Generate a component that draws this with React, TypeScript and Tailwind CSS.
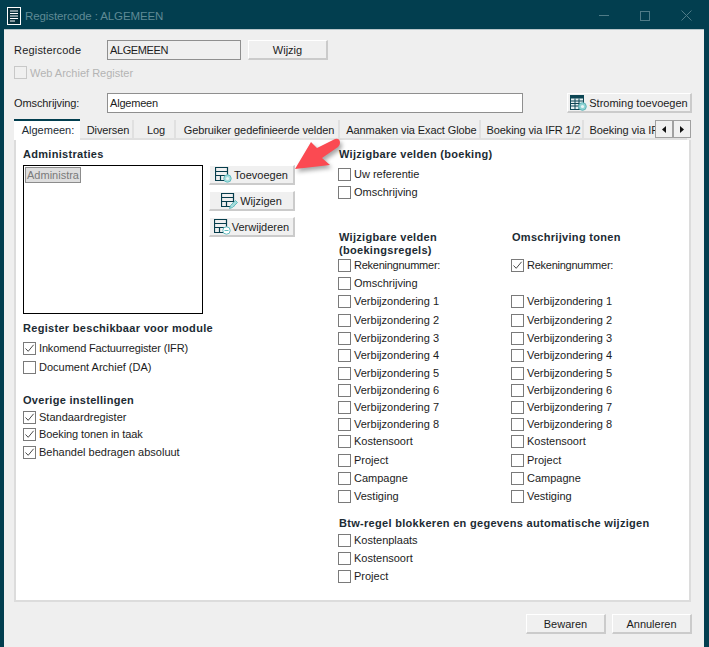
import React from "react";

const font = "font-['Liberation_Sans',Arial,sans-serif]";

function Check({ checked, disabled }: { checked?: boolean; disabled?: boolean }) {
  return (
    <span className={`flex h-[13px] w-[13px] shrink-0 items-center justify-center border ${disabled ? "border-[#c8c8c8] bg-[#f0f0f0]" : "border-[#7a7a7a] bg-white"}`}>
      {checked && (
        <svg width="11" height="11" viewBox="0 0 11 11" fill="none">
          <path d="M1.5 5.5 L4.2 8.3 L9.6 1.8" stroke="#4a4a4a" strokeWidth="1" />
        </svg>
      )}
    </span>
  );
}

function CheckRow({ label, checked, h = "h-[18px]", disabled, tr = "" }: { label: string; checked?: boolean; h?: string; disabled?: boolean; tr?: string }) {
  return (
    <div className={`flex items-start gap-[3px] ${h}`}>
      <Check checked={checked} disabled={disabled} />
      <span className={`whitespace-nowrap ${tr} ${disabled ? "text-[#b4b4b4]" : "text-[#1c1c1c]"}`}>{label}</span>
    </div>
  );
}

function Heading({ children, className = "" }: { children: React.ReactNode; className?: string }) {
  return <div className={`font-bold tracking-[0.3px] text-[#1c2b33] leading-[13px] ${className}`}>{children}</div>;
}

function Btn({ children, className = "" }: { children: React.ReactNode; className?: string }) {
  return (
    <div className={`flex h-[20px] items-center justify-center whitespace-nowrap border-t border-l border-t-white border-l-white border-r-2 border-b-2 border-r-[#cbcbcb] border-b-[#cbcbcb] bg-[#f0f0f0] pt-[1px] text-[#1c1c1c] ${className}`}>
      {children}
    </div>
  );
}

function TableIcon({ badge }: { badge: "plus" | "pen" | "minus" }) {
  return (
    <svg width="17" height="16" viewBox="0 0 17 16" fill="none" className="-mt-[1px] shrink-0">
      <path d="M0.5 0.5H12.5V13.5H0.5ZM0.5 4.5H12.5M0.5 8.5H12.5M5.5 8.5V13.5" stroke="#063d4c" strokeWidth="1.2" />
      {badge === "plus" && <><circle cx="12.5" cy="11.5" r="3.7" fill="#a5dcdc" stroke="#63bcbf" /><circle cx="12.5" cy="11.5" r="1.6" fill="#e8f6f6" /></>}
      {badge === "minus" && <><circle cx="12.5" cy="11.5" r="3.7" fill="#ffffff" stroke="#63bcbf" /><path d="M10.5 11.5H14.5" stroke="#63bcbf" /></>}
      {badge === "pen" && <path d="M8.5 15.5L9.5 12.5L14.5 7.5L16.5 9.5L11.5 14.5Z" fill="#a5dcdc" stroke="#63bcbf" />}
    </svg>
  );
}

const tabs = [
  { label: "Diversen", w: "w-[54px]" },
  { label: "Log", w: "w-[42px]" },
  { label: "Gebruiker gedefinieerde velden", w: "w-[164px]" },
  { label: "Aanmaken via Exact Globe", w: "w-[141px]" },
  { label: "Boeking via IFR 1/2", w: "w-[103px]" },
  { label: "Boeking via IFR 2/2", w: "w-[103px]" },
];

const colA: [string, string, string?][] = [
  ["Rekeningnummer:", "h-[18px]", "tracking-[-0.25px]"],
  ["Omschrijving", "h-[18px]"],
  ["Verbijzondering 1", "h-[19px]"],
  ["Verbijzondering 2", "h-[18px]"],
  ["Verbijzondering 3", "h-[17px]"],
  ["Verbijzondering 4", "h-[18px]"],
  ["Verbijzondering 5", "h-[17px]"],
  ["Verbijzondering 6", "h-[17px]"],
  ["Verbijzondering 7", "h-[17px]"],
  ["Verbijzondering 8", "h-[17px]"],
  ["Kostensoort", "h-[19px]"],
  ["Project", "h-[18px]"],
  ["Campagne", "h-[18px]"],
  ["Vestiging", "h-[18px]"],
];

export default function App() {
  return (
    <div className={`relative flex h-[647px] w-[709px] flex-col overflow-hidden bg-[#023e4f] text-[11px] leading-[13px] ${font}`}>
      {/* Title bar */}
      <div className="flex h-[29px] shrink-0 items-center pl-[7px] pt-[2px]">
        <svg width="14" height="18" viewBox="0 0 14 18" fill="none">
          <rect x="0.5" y="0.5" width="13" height="17" fill="#06303c" stroke="#ffffff" />
          <path d="M3 4H11M3 6.5H11M3 9H11M3 11.5H11M3 14H8" stroke="#ffffff" />
        </svg>
        <span className="ml-[4px] mt-[1px] text-[11.5px] tracking-[-0.1px] text-[#5f8a95]">Registercode : ALGEMEEN</span>
        <div className="ml-auto flex items-center gap-[31px] pr-[17px]">
          <div className="h-px w-[10px] bg-[#4f7b87]" />
          <div className="h-[10px] w-[10px] border border-[#4f7b87]" />
          <svg width="11" height="11" viewBox="0 0 11 11"><path d="M0.5 0.5L10.5 10.5M10.5 0.5L0.5 10.5" stroke="#4f7b87" /></svg>
        </div>
      </div>

      {/* Window client */}
      <div className="ml-[4px] mr-[5px] flex h-[618px] flex-col border-t border-[#b8c6ca] bg-[#efefef] px-[10px]">
        <div className="mt-[10px] flex h-[20px] items-center">
          <span className="w-[93px] tracking-[0.2px] text-[#1c1c1c]">Registercode</span>
          <div className="flex h-[20px] w-[134px] items-center border border-[#8f8f8f] bg-[#efefef] pl-[2px] tracking-[-0.4px] text-[#1c1c1c]">ALGEMEEN</div>
          <Btn className="ml-[7px] w-[80px]">Wijzig</Btn>
        </div>
        <div className="mt-[6px]">
          <CheckRow label="Web Archief Register" disabled h="h-[13px]" tr="mt-[1px]" />
        </div>
        <div className="mt-[14px] flex h-[20px] items-center">
          <span className="w-[93px] tracking-[-0.1px] text-[#1c1c1c]">Omschrijving:</span>
          <div className="flex h-[20px] w-[416px] items-center border border-[#8f8f8f] bg-white pl-[2px] tracking-[-0.2px] text-[#1c1c1c]">Algemeen</div>
          <Btn className="ml-[44px] w-[125px] gap-[2px]">
            <svg width="17" height="16" viewBox="0 0 17 16" fill="none" className="-mt-[1px] shrink-0">
              <rect x="0.5" y="0.5" width="13" height="14" fill="#e6f1f2" stroke="#0d4654" />
              <rect x="1" y="1" width="12" height="2.5" fill="#0d4654" />
              <path d="M1 6H13M1 8.5H13M1 11H13M5 3.5V14.5M9 3.5V14.5" stroke="#0d4654" />
              <circle cx="12.5" cy="11.5" r="3.8" fill="#8fd3d4" stroke="#5fb5b8" />
              <circle cx="12.5" cy="11.5" r="1.6" fill="#e8f6f6" />
            </svg>
            Stroming toevoegen
          </Btn>
        </div>

        {/* Tabs */}
        <div className="relative mt-[6px] flex h-[21px] w-[677px] shrink-0 items-end overflow-hidden">
          <div className="z-10 flex h-[21px] w-[66px] shrink-0 justify-center border-t-2 border-[#023e4f] bg-white pl-[2px] pt-[3px] text-[#1c2b33]">Algemeen:</div>
          <div className="flex items-end">
            {tabs.map((t) => (
              <div key={t.label} className={`flex h-[20px] shrink-0 items-center justify-center whitespace-nowrap border-r-2 border-b-2 border-[#e0e0e0] bg-[#efefef] pl-[4px] pt-[3px] tracking-[-0.1px] text-[#1c1c1c] ${t.w}`}>
                {t.label}
              </div>
            ))}
          </div>
          <div className="absolute right-0 top-[1px] flex h-[18px] w-[36px] border border-[#a0a0a0] bg-[#f0f0f0]">
            <div className="flex flex-1 items-center justify-center border-r-2 border-[#a0a0a0]">
              <svg width="4" height="7" viewBox="0 0 4 7"><path d="M4 0V7L0 3.5Z" fill="#111" /></svg>
            </div>
            <div className="flex flex-1 items-center justify-center">
              <svg width="4" height="7" viewBox="0 0 4 7"><path d="M0 0V7L4 3.5Z" fill="#111" /></svg>
            </div>
          </div>
        </div>

        {/* Panel */}
        <div className="flex h-[462px] w-[677px] shrink-0 border-r-2 border-b-2 border-l-2 border-[#dcdcdc] bg-white pl-[7px]">
          {/* Left */}
          <div className="flex w-[316px] shrink-0 flex-col">
            <Heading className="mt-[8px]">Administraties</Heading>
            <div className="mt-[4px] flex">
              <div className="h-[149px] w-[180px] border border-black bg-white p-[1px]">
                <div className="flex h-[16px] w-[56px] items-center justify-center border border-[#8c8c8c] bg-[#dedede] text-[#7a7a7a]">Administra</div>
              </div>
              <div className="ml-[6px] flex flex-col gap-[6px]">
                <Btn className="w-[86px] gap-[2px]"><TableIcon badge="plus" />Toevoegen</Btn>
                <Btn className="w-[86px] gap-[2px]"><TableIcon badge="pen" />Wijzigen</Btn>
                <Btn className="w-[86px] gap-[1px]"><TableIcon badge="minus" />Verwijderen</Btn>
              </div>
            </div>
            <Heading className="mt-[8px]">Register beschikbaar voor module</Heading>
            <div className="mt-[7px] flex flex-col">
              <CheckRow label="Inkomend Factuurregister (IFR)" checked h="h-[19px]" tr="tracking-[-0.15px]" />
              <CheckRow label="Document Archief (DA)" h="h-[19px]" />
            </div>
            <Heading className="mt-[14px]">Overige instellingen</Heading>
            <div className="mt-[4px] flex flex-col">
              <CheckRow label="Standaardregister" h="h-[17px]" checked />
              <CheckRow label="Boeking tonen in taak" h="h-[18px]" checked tr="tracking-[-0.1px]" />
              <CheckRow label="Behandel bedragen absoluut" h="h-[18px]" checked />
            </div>
          </div>

          {/* Right */}
          <div className="flex flex-col">
            <Heading className="mt-[8px]">Wijzigbare velden (boeking)</Heading>
            <div className="-ml-[1px] mt-[7px] flex flex-col">
              <CheckRow label="Uw referentie" />
              <CheckRow label="Omschrijving" />
            </div>
            <div className="mt-[27px] flex">
              <div className="w-[172px]">
                <Heading className="w-[130px]">Wijzigbare velden (boekingsregels)</Heading>
                <div className="-ml-[1px] mt-[2px] flex flex-col">
                  {colA.map(([l, h, tr]) => <CheckRow key={l} label={l} h={h} tr={tr} />)}
                </div>
              </div>
              <div>
                <Heading className="ml-[1px]">Omschrijving tonen</Heading>
                <div className="mt-[15px] flex flex-col">
                  {colA.map(([l, h, tr]) =>
                    l === "Omschrijving" ? <div key={l} className={h} /> : <CheckRow key={l} label={l} h={h} tr={tr} checked={l === "Rekeningnummer:"} />
                  )}
                </div>
              </div>
            </div>
            <Heading className="mt-[9px]">Btw-regel blokkeren en gegevens automatische wijzigen</Heading>
            <div className="-ml-[1px] mt-[4px] flex flex-col">
              <CheckRow label="Kostenplaats" />
              <CheckRow label="Kostensoort" />
              <CheckRow label="Project" />
            </div>
          </div>
        </div>

        {/* Footer */}
        <div className="mt-[12px] flex justify-end gap-[6px] pr-[2px]">
          <Btn className="w-[80px]">Bewaren</Btn>
          <Btn className="w-[80px]">Annuleren</Btn>
        </div>
      </div>

      {/* Annotation arrow */}
      <svg className="absolute left-[285px] top-[135px] drop-shadow-[2px_3px_2px_rgba(0,0,0,0.35)]" width="60" height="42" viewBox="0 0 60 42">
        <path d="M10 34 L26 7 L32 13 L50 4 Q55 3 55 8 Q55 10 53 12 L37 23 L45 30 Z" fill="#fb4a52" />
      </svg>
    </div>
  );
}
